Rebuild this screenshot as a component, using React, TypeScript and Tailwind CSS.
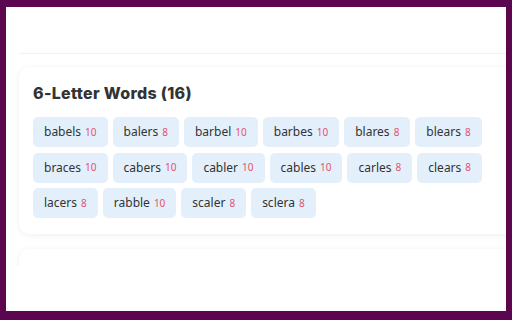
import React from 'react';

const WORDS: { word: string; score: number }[] = [
  { word: 'babels', score: 10 },
  { word: 'balers', score: 8 },
  { word: 'barbel', score: 10 },
  { word: 'barbes', score: 10 },
  { word: 'blares', score: 8 },
  { word: 'blears', score: 8 },
  { word: 'braces', score: 10 },
  { word: 'cabers', score: 10 },
  { word: 'cabler', score: 10 },
  { word: 'cables', score: 10 },
  { word: 'carles', score: 8 },
  { word: 'clears', score: 8 },
  { word: 'lacers', score: 8 },
  { word: 'rabble', score: 10 },
  { word: 'scaler', score: 8 },
  { word: 'sclera', score: 8 },
];

const cardCls =
  'w-[520px] shrink-0 bg-white rounded-[10px] shadow-[0_1px_6px_rgba(0,0,0,0.07)]';

export default function App() {
  return (
    <div
      className="w-[512px] h-[320px] bg-[#5c0650] pt-[7px] px-[6px] pb-[9px]"
      style={{ fontFamily: '"Noto Sans", "Open Sans", sans-serif' }}
    >
      <div className="w-full h-full bg-white overflow-hidden">
        <div className="h-[259px] overflow-hidden px-[13px] flex flex-col">
          {/* previous card, scrolled mostly out of view */}
          <div className="w-[520px] shrink-0 h-[47px] bg-white border-b border-[#f2f2f2]" />

          <div className={`${cardCls} mt-[13px] pt-[14px] pb-[16px] px-[14px]`}>
            <h2
              className="text-[16px] leading-[24px] font-extrabold text-[#333] mb-[12px] tracking-[0.3px]"
              style={{ fontFamily: 'Inter, "Noto Sans", sans-serif' }}
            >
              6-Letter Words (16)
            </h2>
            <div className="flex flex-wrap gap-x-[5px] gap-y-[5.5px] w-[460px]">
              {WORDS.map((w) => (
                <div
                  key={w.word}
                  className="h-[30px] px-[11px] flex items-center gap-[4px] bg-[#e3f0fc] rounded-[5px]"
                >
                  <span className="text-[12px] text-[#333]">{w.word}</span>
                  <span className="text-[10px] text-[#e3506a]">{w.score}</span>
                </div>
              ))}
            </div>
          </div>

          <div className={`${cardCls} mt-[15px] pt-[14px] px-[14px] h-[80px]`}>
            <h2
              className="text-[16px] leading-[24px] font-extrabold text-[#333] tracking-[0.3px]"
              style={{ fontFamily: 'Inter, "Noto Sans", sans-serif' }}
            >
              5-Letter Words (27)
            </h2>
          </div>
        </div>
      </div>
    </div>
  );
}
